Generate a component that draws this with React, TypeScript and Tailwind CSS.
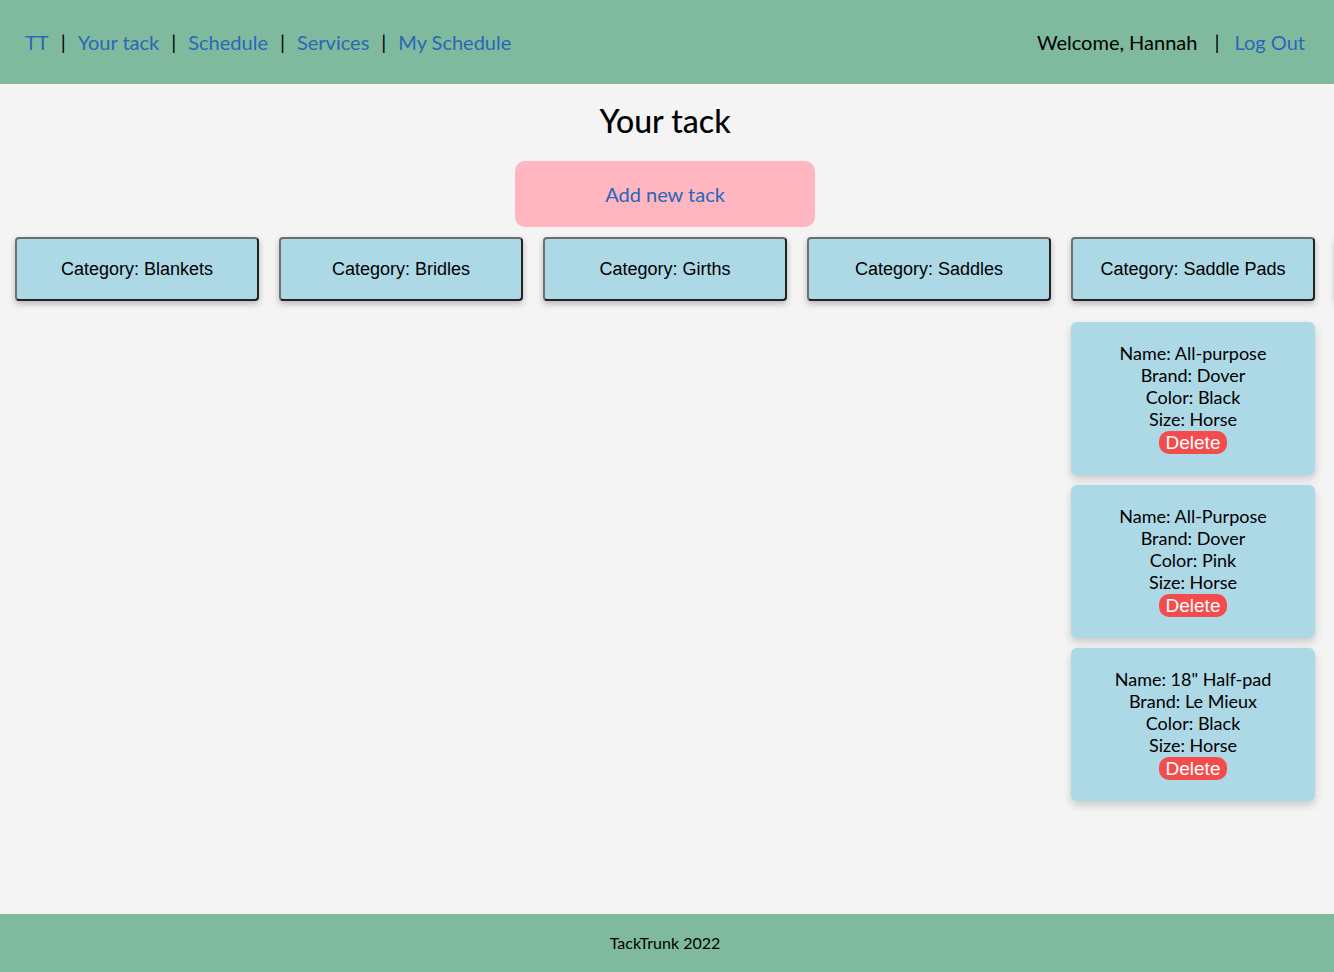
import React from "react";

const font = { fontFamily: "Lato, 'Open Sans', sans-serif" };
const arial = { fontFamily: "'Liberation Sans', Arial, sans-serif" };

type Item = { name: string; brand: string; color: string; size: string };

const categories: { title: string; items: Item[] }[] = [
  { title: "Blankets", items: [] },
  { title: "Bridles", items: [] },
  { title: "Girths", items: [] },
  { title: "Saddles", items: [] },
  {
    title: "Saddle Pads",
    items: [
      { name: "All-purpose", brand: "Dover", color: "Black", size: "Horse" },
      { name: "All-Purpose", brand: "Dover", color: "Pink", size: "Horse" },
      { name: '18" Half-pad', brand: "Le Mieux", color: "Black", size: "Horse" },
    ],
  },
];

function Sep() {
  return <span className="text-black">|</span>;
}

const catBtn =
  "h-[64px] w-full rounded-[4px] border-2 border-t-[#6e6e6e] border-l-[#6e6e6e] border-r-[#222] border-b-[#222] bg-[#add8e6] shadow-[0_3px_6px_rgba(0,0,0,0.25)] text-[18px] text-black";

export default function App() {
  return (
    <div
      className="min-h-screen w-[1334px] overflow-hidden flex flex-col bg-[#f4f4f4] text-black"
      style={font}
    >
      <header className="h-[84px] shrink-0 bg-[#7fba9e] flex items-center justify-between pl-[25px] pr-[29px] text-[20px]">
        <nav className="flex items-center gap-[12px]">
          <a className="text-[#2a67b8]">TT</a>
          <Sep />
          <a className="text-[#2a67b8]">Your tack</a>
          <Sep />
          <a className="text-[#2a67b8]">Schedule</a>
          <Sep />
          <a className="text-[#2a67b8]">Services</a>
          <Sep />
          <a className="text-[#2a67b8]">My Schedule</a>
        </nav>
        <div className="flex items-center gap-[15px]">
          <span className="mr-[2px]">Welcome, Hannah</span>
          <Sep />
          <a className="text-[#2a67b8]">Log Out</a>
        </div>
      </header>

      <main className="flex-1 flex flex-col items-center pr-[4px]">
        <h2 className="mt-[17px] text-[32px] leading-[40px] font-medium">Your tack</h2>
        <button className="mt-[20px] w-[300px] h-[66px] rounded-[10px] bg-[#ffb6c1] text-[#2a67b8] text-[20px]">
          Add new tack
        </button>
        <div className="self-start mt-[10px] pl-[15px] flex gap-[20px]">
          {categories.map((c) => (
            <div key={c.title} className="w-[244px] shrink-0 flex flex-col gap-[10px]">
              <button className={catBtn} style={arial}>
                Category: {c.title}
              </button>
              {c.items.map((it, i) => (
                <div
                  key={i}
                  className={`${i === 0 ? "mt-[11px]" : ""} h-[153px] rounded-[6px] bg-[#add8e6] shadow-[0_4px_8px_rgba(0,0,0,0.18)] flex flex-col items-center pt-[20px] text-[18px] leading-[22px]`}
                >
                  <div>Name: {it.name}</div>
                  <div>Brand: {it.brand}</div>
                  <div>Color: {it.color}</div>
                  <div>Size: {it.size}</div>
                  <button
                    className="mt-[1px] h-[23px] px-[7px] rounded-[10px] bg-[#f44c4c] text-white text-[19px] leading-[23px]"
                    style={arial}
                  >
                    Delete
                  </button>
                </div>
              ))}
            </div>
          ))}
          <div className="w-[244px] shrink-0">
            <div className={catBtn} aria-hidden="true" />
          </div>
        </div>
      </main>

      <footer className="h-[58px] shrink-0 bg-[#7fba9e] flex items-center justify-center pr-[4px] text-[16px]">
        TackTrunk 2022
      </footer>
    </div>
  );
}
